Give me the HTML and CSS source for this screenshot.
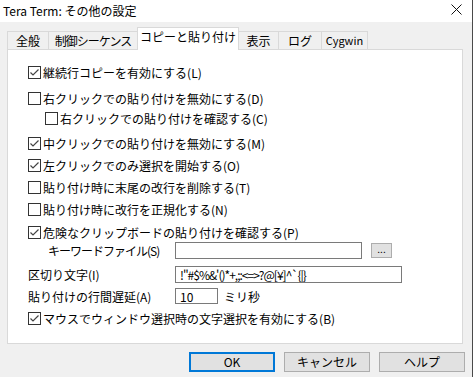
FILE: index.html
```html
<!DOCTYPE html>
<html lang="ja">
<head>
    <meta charset="UTF-8">
    <title>Tera Term: その他の設定</title>
    <link rel="stylesheet" href="styles.css">
</head>
<body>
    <div class="window">
        <div class="titlebar">
            <span class="title">Tera Term: その他の設定</span>
            <svg class="close" width="11" height="11" viewBox="0 0 11 11">
                <path d="M0.5 0.5L10.5 10.5M10.5 0.5L0.5 10.5" stroke="#111" stroke-width="1" fill="none"/>
            </svg>
        </div>

        <div class="client">
            <div class="tabs">
                <div class="tab tab-general">全般</div>
                <div class="tab tab-control">制御シーケンス</div>
                <div class="tab tab-copy active">コピーと貼り付け</div>
                <div class="tab tab-view">表示</div>
                <div class="tab tab-log">ログ</div>
                <div class="tab tab-cygwin">Cygwin</div>
                <div class="tab-fill"></div>
            </div>

            <div class="panel">
                <label class="row">
                    <span class="box checked"><svg width="11" height="11" viewBox="0 0 11 11"><path d="M1.5 5.5L4 8L9.5 2.5" stroke="#444" stroke-width="1.2" fill="none"/></svg></span>
                    継続行コピーを有効にする(L)
                </label>
                <label class="row row-gap4">
                    <span class="box"></span>
                    右クリックでの貼り付けを無効にする(D)
                </label>
                <label class="row row-sub">
                    <span class="box"></span>
                    右クリックでの貼り付けを確認する(C)
                </label>
                <label class="row row-gap5">
                    <span class="box checked"><svg width="11" height="11" viewBox="0 0 11 11"><path d="M1.5 5.5L4 8L9.5 2.5" stroke="#444" stroke-width="1.2" fill="none"/></svg></span>
                    中クリックでの貼り付けを無効にする(M)
                </label>
                <label class="row">
                    <span class="box checked"><svg width="11" height="11" viewBox="0 0 11 11"><path d="M1.5 5.5L4 8L9.5 2.5" stroke="#444" stroke-width="1.2" fill="none"/></svg></span>
                    左クリックでのみ選択を開始する(O)
                </label>
                <label class="row">
                    <span class="box"></span>
                    貼り付け時に末尾の改行を削除する(T)
                </label>
                <label class="row">
                    <span class="box"></span>
                    貼り付け時に改行を正規化する(N)
                </label>
                <label class="row row-danger">
                    <span class="box checked"><svg width="11" height="11" viewBox="0 0 11 11"><path d="M1.5 5.5L4 8L9.5 2.5" stroke="#444" stroke-width="1.2" fill="none"/></svg></span>
                    危険なクリップボードの貼り付けを確認する(P)
                </label>
                <div class="field field-keyword">
                    <span class="field-label">キーワードファイル(S)</span>
                    <input type="text" class="input input-keyword" value="">
                    <button type="button" class="browse">...</button>
                </div>
                <div class="field field-delim">
                    <span class="field-label">区切り文字(I)</span>
                    <input type="text" class="input input-delim" value="!&quot;#$%&amp;'()*+,;:&lt;=&gt;?@[¥]^`{|}">
                </div>
                <div class="field">
                    <span class="field-label">貼り付けの行間遅延(A)</span>
                    <input type="text" class="input input-delay" value="10">
                    <span class="unit">ミリ秒</span>
                </div>
                <label class="row">
                    <span class="box checked"><svg width="11" height="11" viewBox="0 0 11 11"><path d="M1.5 5.5L4 8L9.5 2.5" stroke="#444" stroke-width="1.2" fill="none"/></svg></span>
                    マウスでウィンドウ選択時の文字選択を有効にする(B)
                </label>
            </div>

            <div class="buttons">
                <button type="button" class="btn btn-default">OK</button>
                <button type="button" class="btn">キャンセル</button>
                <button type="button" class="btn">ヘルプ</button>
            </div>
        </div>
    </div>
</body>
</html>
```

FILE: styles.css
```css
body {
    margin: 0;
    padding: 0;
    font-family: "Noto Sans CJK JP", "Noto Sans", sans-serif;
    font-size: 12px;
    color: #000000;
    background-color: #F0F0F0;
}

.window {
    width: 472px;
    height: 377px;
    border-right: 1px solid #4A4A4A;
    background-color: #F0F0F0;
    overflow: hidden;
}

.titlebar {
    height: 22px;
    background-color: #FFFFFF;
    display: flex;
    align-items: center;
    justify-content: space-between;
    padding: 0 10px 0 3px;
}

.title {
    font-size: 12px;
    margin-top: -2px;
}

.close {
    margin-top: -3px;
}

.client {
    padding: 5px 9px 0 7px;
}

/* tabs */
.tabs {
    display: flex;
    align-items: flex-end;
    height: 23px;
}

.tab {
    box-sizing: border-box;
    height: 19px;
    margin-left: -1px;
    border: 1px solid #D9D9D9;
    background-color: #F0F0F0;
    text-align: center;
    line-height: 17px;
    white-space: nowrap;
}

.tab.active {
    height: 23px;
    background-color: #FFFFFF;
    border-bottom: none;
    line-height: 18px;
}

.tab-general { margin-left: 0; width: 42px; }
.tab-control { width: 90px; letter-spacing: -1px; }
.tab-copy { width: 102px; }
.tab-view { width: 41px; }
.tab-log { width: 44px; }
.tab-cygwin { width: 47px; font-size: 11px; }

.tab-fill {
    flex: 1;
    border-bottom: 1px solid #D9D9D9;
}

/* panel */
.panel {
    box-sizing: border-box;
    width: 456px;
    height: 294px;
    background-color: #FFFFFF;
    border: 1px solid #D9D9D9;
    border-top: none;
    padding: 11px 0 0 20px;
    display: flex;
    flex-direction: column;
}

.row {
    display: flex;
    align-items: center;
    height: 22px;
    white-space: nowrap;
}

.row-gap4 { margin-top: 4px; }
.row-gap5 { margin-top: 5px; }
.row-sub { height: 18px; padding-left: 17px; }
.row-danger { height: 20px; margin-top: 2px; }

.box {
    box-sizing: border-box;
    width: 13px;
    height: 13px;
    border: 1px solid #333333;
    background-color: #FFFFFF;
    margin-right: 2px;
    flex-shrink: 0;
    display: flex;
    align-items: center;
    justify-content: center;
}

.field {
    display: flex;
    align-items: center;
    height: 22px;
    white-space: nowrap;
}

.field-keyword {
    height: 17px;
    padding-left: 20px;
}

.field-delim {
    margin-top: 4px;
}

.field-label {
    width: 147px;
    flex-shrink: 0;
}

.field-keyword .field-label {
    width: 127px;
    letter-spacing: -1px;
}

.input {
    box-sizing: border-box;
    height: 17px;
    border: 1px solid #7A7A7A;
    background-color: #FFFFFF;
    font-family: inherit;
    font-size: 12px;
    padding: 0 4px;
    margin: 0;
    outline: none;
}

.input-keyword { width: 187px; }
.input-delim { width: 227px; letter-spacing: -1px; }
.input-delay { width: 43px; height: 16px; }

.browse {
    box-sizing: border-box;
    width: 21px;
    height: 15px;
    margin: 0 0 0 9px;
    padding: 0 0 4px 0;
    border: 1px solid #ADADAD;
    background-color: #E1E1E1;
    font-family: inherit;
    font-size: 10px;
    line-height: 8px;
}

.unit {
    margin-left: 6px;
}

/* buttons */
.buttons {
    display: flex;
    justify-content: flex-end;
    gap: 9px;
    margin: 8px -2px 0 0;
}

.btn {
    box-sizing: border-box;
    width: 86px;
    height: 20px;
    padding: 0;
    border: 1px solid #ADADAD;
    background-color: #E1E1E1;
    font-family: inherit;
    font-size: 12px;
    line-height: 16px;
    color: #000000;
}

.btn-default {
    border: 2px solid #0078D7;
}
```
